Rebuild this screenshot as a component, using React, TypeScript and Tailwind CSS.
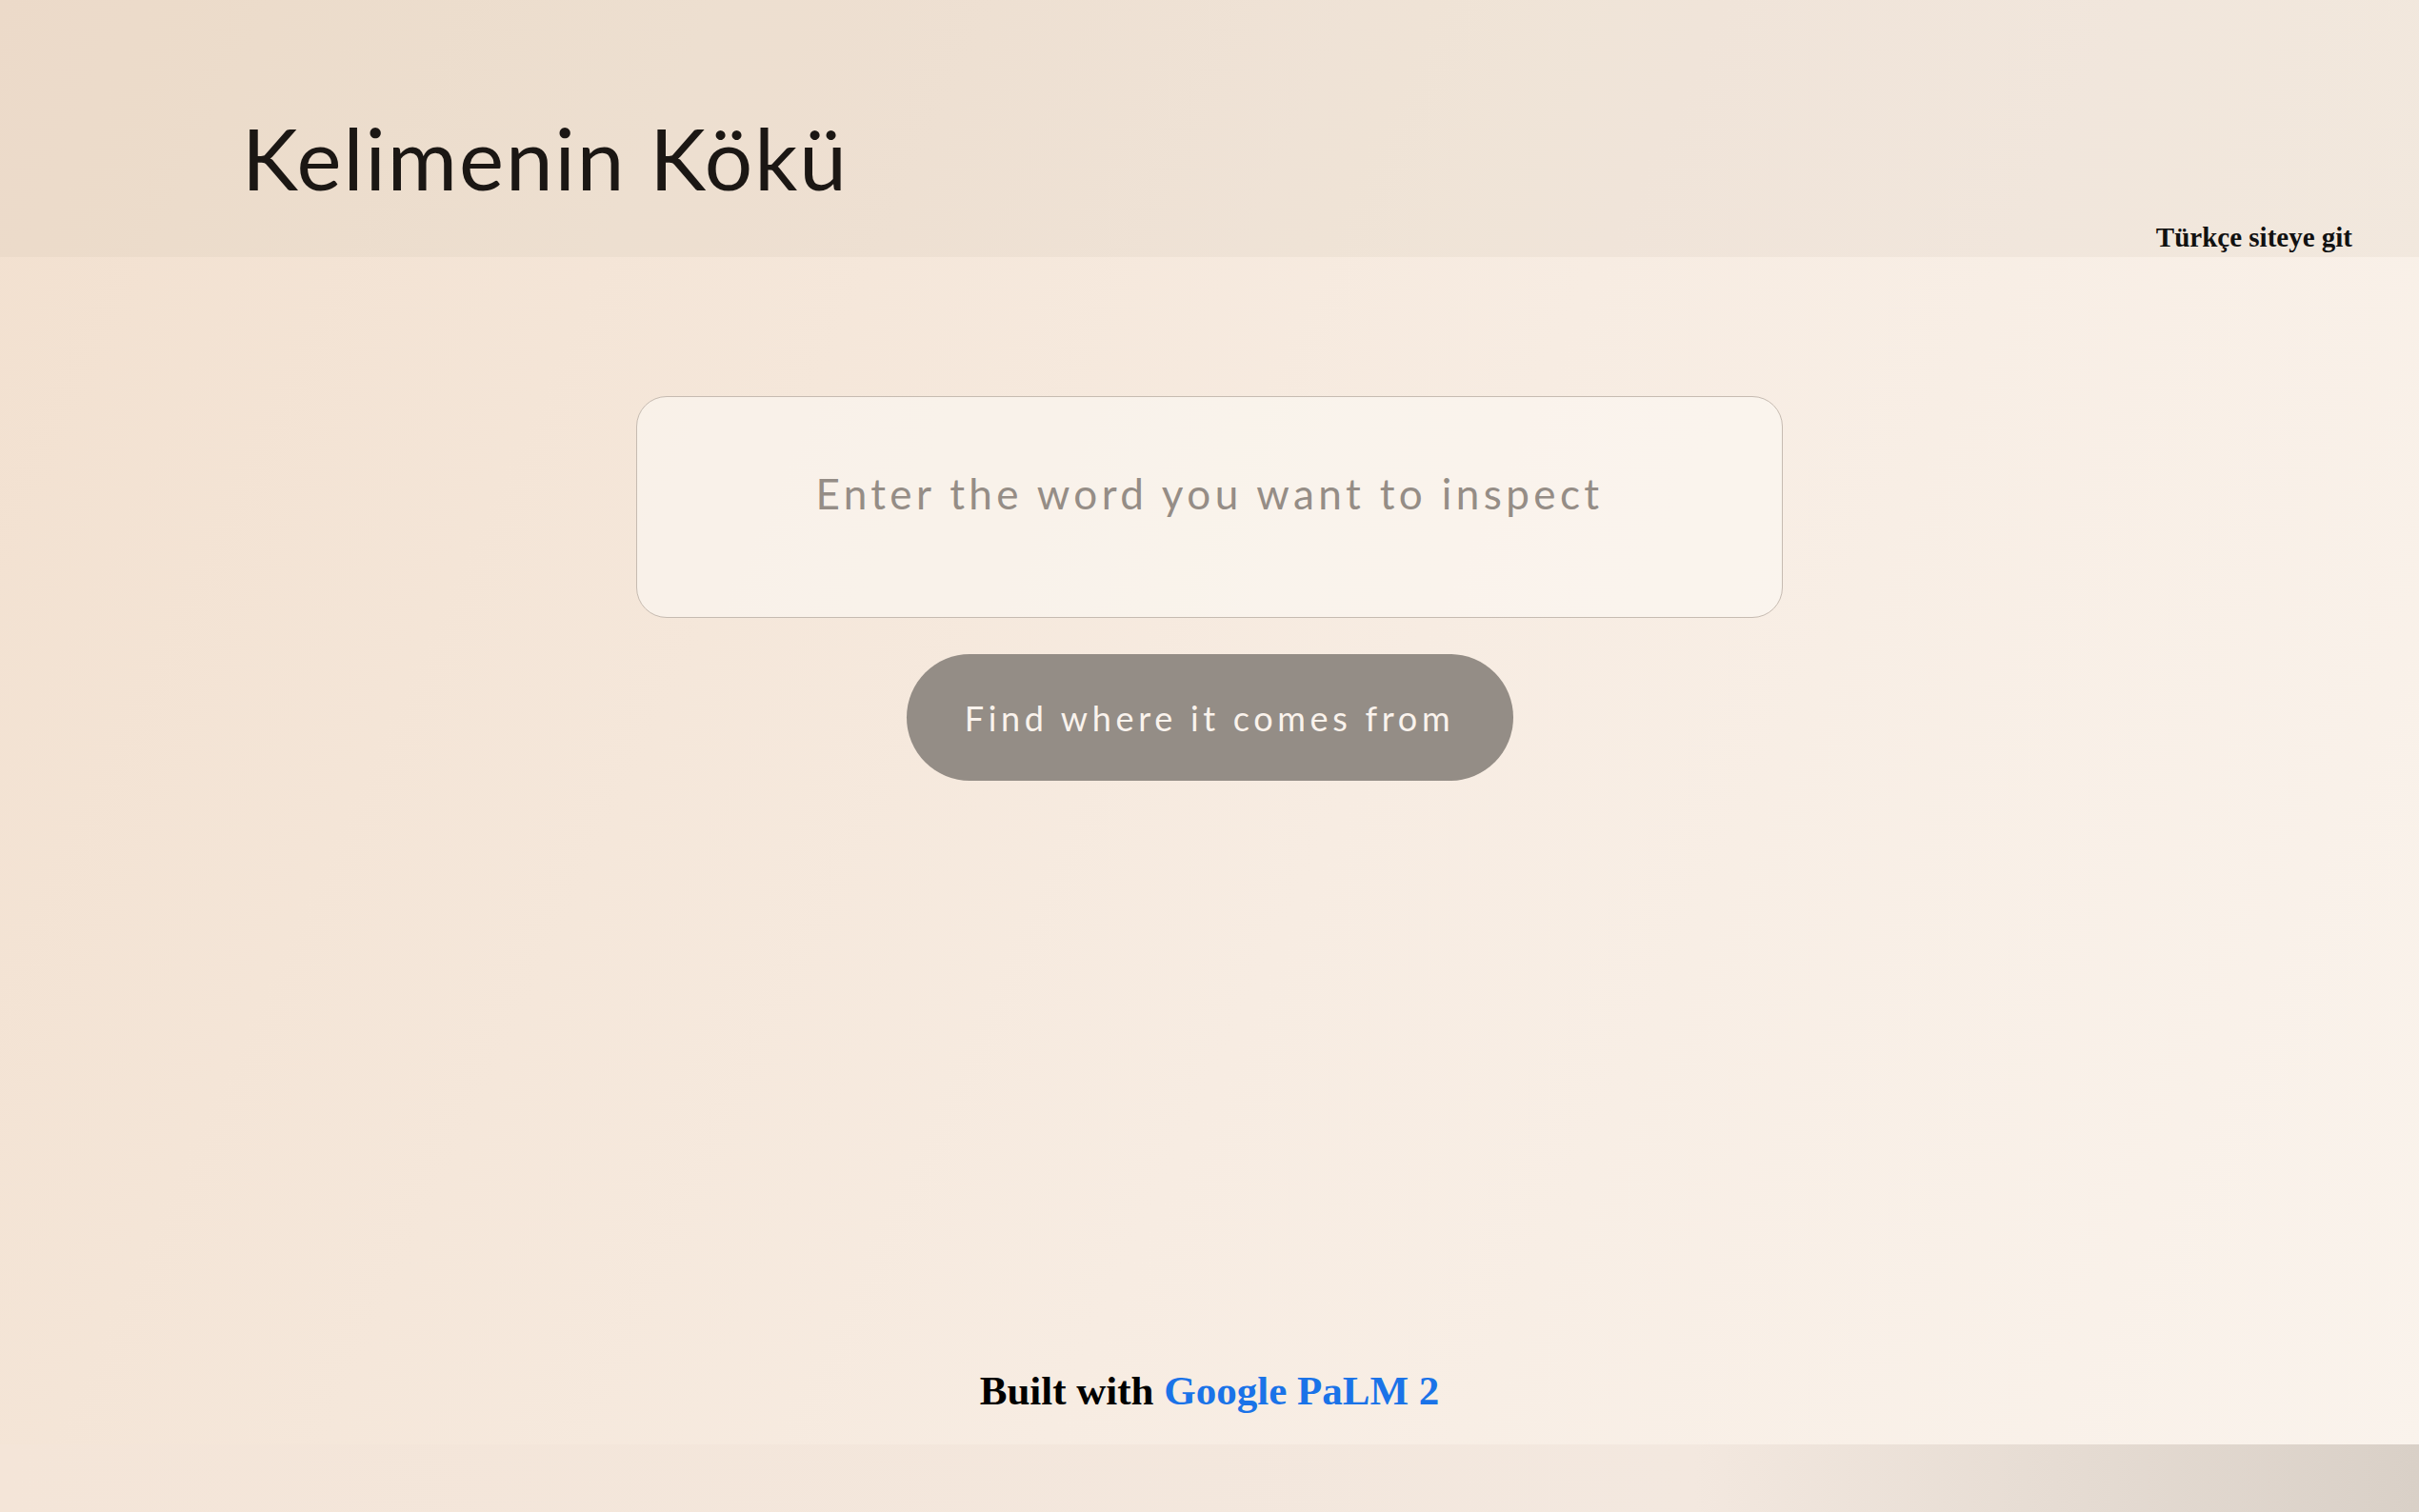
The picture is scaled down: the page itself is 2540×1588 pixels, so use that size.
import React from 'react';

export default function App() {
  return (
    <div className="min-h-screen flex flex-col bg-[linear-gradient(115deg,#f2e0cf_0%,#f7ece2_55%,#faf3ec_100%)]">
      {/* Title band */}
      <header className="h-[270px] pt-[121px] bg-[rgba(200,185,170,0.15)] flex flex-col">
        <h1 className="pl-[254px] text-[89px] leading-none tracking-[0.022em] text-[#1b1714] font-normal font-['Lato','Inter',sans-serif]">
          Kelimenin Kökü
        </h1>
        <div className="flex justify-end pr-[70px] mt-[25px]">
          <a href="#" className="text-[29px] leading-none font-bold text-[#111] font-['Liberation_Serif','Times_New_Roman',serif]">
            Türkçe siteye git
          </a>
        </div>
      </header>

      <main className="h-[1247px] flex flex-col items-center">
        <input
          type="text"
          placeholder="Enter the word you want to inspect"
          className="mt-[146px] w-[1204px] h-[233px] pb-[30px] rounded-[32px] border-[1.5px] border-[#c6bbb1] bg-[#fcf8f4]/60 text-center text-[44px] tracking-[0.1em] text-[#5a524c] placeholder:text-[#958d86] font-['Lato','Inter',sans-serif] outline-none"
        />
        <button className="mt-[38px] w-[637px] h-[133px] rounded-full bg-[#948d86] text-[#faf3ed] text-[36px] tracking-[0.13em] font-['Lato','Inter',sans-serif]">
          Find where it comes from
        </button>

        <p className="mt-auto pb-[35px] text-[43px] leading-none font-bold text-[#000] font-['Liberation_Serif','Times_New_Roman',serif]">
          Built with <a href="#" className="text-[#1a73e8]">Google PaLM 2</a>
        </p>
      </main>

      <div className="flex-1 min-h-[71px] bg-[linear-gradient(to_right,#f4e5d8_0%,#f3e8df_70%,#d9d0c7_100%)]" />
    </div>
  );
}
